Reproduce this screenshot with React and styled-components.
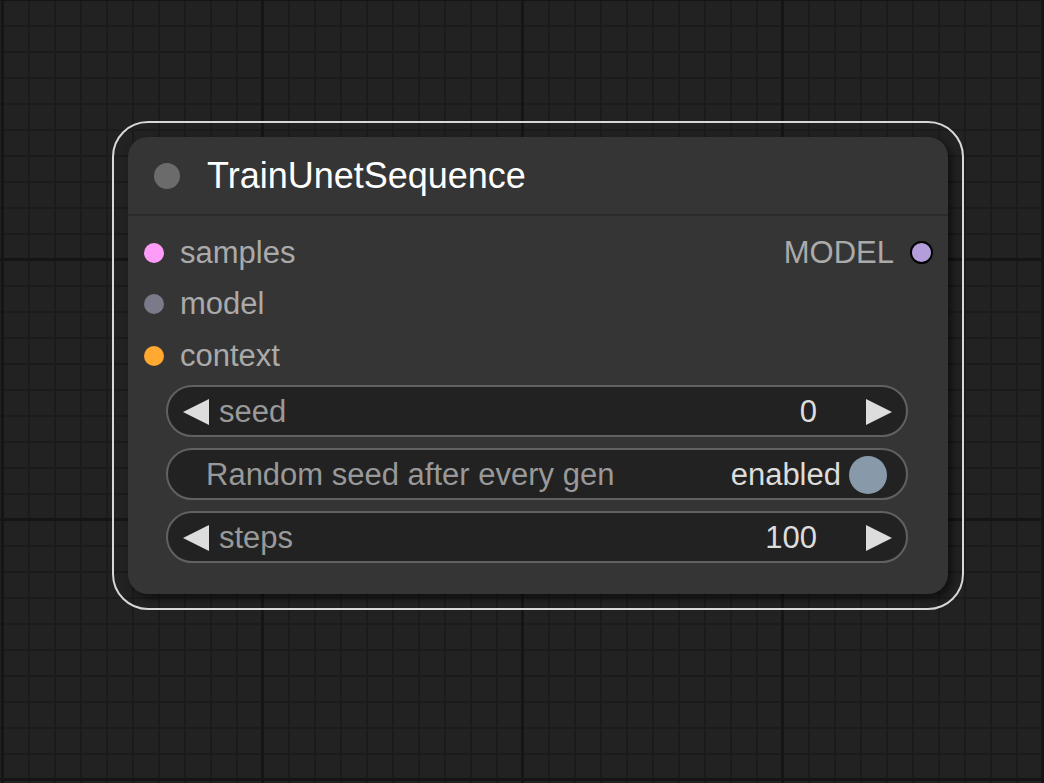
import React from 'react'
import styled, { createGlobalStyle } from 'styled-components'

const GlobalStyle = createGlobalStyle`
  html, body {
    margin: 0;
    padding: 0;
    background: #222;
  }
  body {
    font-family: "Liberation Sans", Arial, sans-serif;
  }
`

const Canvas = styled.div`
  position: relative;
  width: 1044px;
  height: 783px;
  overflow: hidden;
  background-color: #222;
  background-image:
    linear-gradient(to right, #151515 3px, transparent 3px),
    linear-gradient(to bottom, #151515 3px, transparent 3px),
    linear-gradient(to right, #1b1b1b 2px, transparent 2px),
    linear-gradient(to bottom, #1b1b1b 2px, transparent 2px);
  background-size: 260px 260px, 260px 260px, 26px 26px, 26px 26px;
  background-position: 261px 0, 0 258px, 2px 0, 0 25px;
`

const Selection = styled.div`
  position: absolute;
  left: 112px;
  top: 121px;
  padding: 14px;
  border: 2px solid #d8d8d8;
  border-radius: 36px;
`

const NodeBody = styled.div`
  width: 820px;
  height: 457px;
  background: #353535;
  border-radius: 20px;
  box-shadow: 4px 4px 8px rgba(0, 0, 0, 0.55);
  display: flex;
  flex-direction: column;
`

const TitleBar = styled.div`
  height: 79px;
  box-sizing: border-box;
  padding-top: 1px;
  display: flex;
  align-items: center;
  padding-left: 26px;
  gap: 27px;
  border-bottom: 2px solid #2b2b2b;
`

const Dot = styled.div`
  flex: none;
  width: ${p => p.size}px;
  height: ${p => p.size}px;
  border-radius: 50%;
  background: ${p => p.color};
  box-sizing: border-box;
  border: ${p => (p.outlined ? '2px solid #000' : 'none')};
`

const Title = styled.div`
  font-size: 36px;
  color: #fff;
`

const Slots = styled.div`
  padding-top: 11px;
  display: flex;
  flex-direction: column;
`

const SlotRow = styled.div`
  height: 51.6px;
  display: flex;
  align-items: center;
  padding: 0 15px 0 16px;
`

const SlotLabel = styled.span`
  font-size: 31px;
  color: #aaa;
  margin-left: 16px;
  flex: 1;
`

const OutLabel = styled.span`
  font-size: 31px;
  color: #aaa;
  margin-right: 16px;
`

const Widgets = styled.div`
  margin-top: 3px;
  padding: 0 40px 0 38px;
  display: flex;
  flex-direction: column;
  gap: 11px;
`

const Pill = styled.div`
  height: 52px;
  box-sizing: border-box;
  border: 2px solid #616161;
  border-radius: 26px;
  background: #222;
  display: flex;
  align-items: center;
  padding: ${p => (p.toggle ? '2px 19px 0 38px' : '2px 14px 0 15px')};
  font-size: 31px;
`

const WLabel = styled.span`
  color: #999;
  flex: 1;
  margin-left: ${p => (p.toggle ? 0 : 10)}px;
`

const WValue = styled.span`
  color: #ddd;
  margin-right: ${p => (p.toggle ? 8 : 49)}px;
`

const Arrow = ({ dir }) => (
  <svg width="26" height="26" viewBox="0 0 26 26" style={{ flex: 'none' }}>
    {dir === 'left' ? (
      <polygon points="26,0 26,26 0,13" fill="#ddd" />
    ) : (
      <polygon points="0,0 0,26 26,13" fill="#ddd" />
    )}
  </svg>
)

const NumberWidget = ({ label, value }) => (
  <Pill>
    <Arrow dir="left" />
    <WLabel>{label}</WLabel>
    <WValue>{value}</WValue>
    <Arrow dir="right" />
  </Pill>
)

const ToggleWidget = ({ label, value }) => (
  <Pill toggle>
    <WLabel toggle>{label}</WLabel>
    <WValue toggle>{value}</WValue>
    <Dot size={38} color="#8899aa" />
  </Pill>
)

const inputs = [
  { name: 'samples', color: '#ff9cf9' },
  { name: 'model', color: '#7a7a8b' },
  { name: 'context', color: '#ffa931' },
]

export default function App() {
  return (
    <>
      <GlobalStyle />
      <Canvas>
        <Selection>
          <NodeBody>
            <TitleBar>
              <Dot size={26} color="#6b6b6b" />
              <Title>TrainUnetSequence</Title>
            </TitleBar>
            <Slots>
              {inputs.map((s, i) => (
                <SlotRow key={s.name}>
                  <Dot size={20} color={s.color} />
                  <SlotLabel>{s.name}</SlotLabel>
                  {i === 0 && (
                    <>
                      <OutLabel>MODEL</OutLabel>
                      <Dot size={23} color="#b39ddb" outlined />
                    </>
                  )}
                </SlotRow>
              ))}
            </Slots>
            <Widgets>
              <NumberWidget label="seed" value="0" />
              <ToggleWidget label="Random seed after every gen" value="enabled" />
              <NumberWidget label="steps" value="100" />
            </Widgets>
          </NodeBody>
        </Selection>
      </Canvas>
    </>
  )
}
